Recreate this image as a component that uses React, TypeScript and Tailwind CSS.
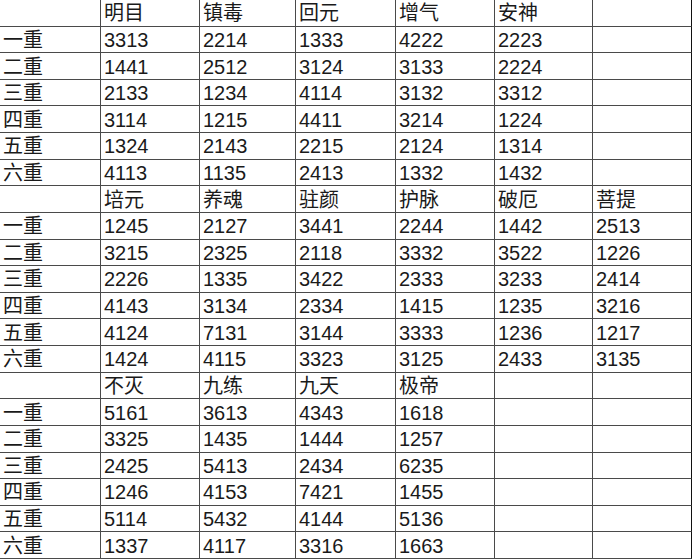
const sections: { head: string[]; rows: string[][] }[] = [
  {
    head: ["明目", "镇毒", "回元", "增气", "安神", ""],
    rows: [
      ["3313", "2214", "1333", "4222", "2223", ""],
      ["1441", "2512", "3124", "3133", "2224", ""],
      ["2133", "1234", "4114", "3132", "3312", ""],
      ["3114", "1215", "4411", "3214", "1224", ""],
      ["1324", "2143", "2215", "2124", "1314", ""],
      ["4113", "1135", "2413", "1332", "1432", ""],
    ],
  },
  {
    head: ["培元", "养魂", "驻颜", "护脉", "破厄", "菩提"],
    rows: [
      ["1245", "2127", "3441", "2244", "1442", "2513"],
      ["3215", "2325", "2118", "3332", "3522", "1226"],
      ["2226", "1335", "3422", "2333", "3233", "2414"],
      ["4143", "3134", "2334", "1415", "1235", "3216"],
      ["4124", "7131", "3144", "3333", "1236", "1217"],
      ["1424", "4115", "3323", "3125", "2433", "3135"],
    ],
  },
  {
    head: ["不灭", "九练", "九天", "极帝", "", ""],
    rows: [
      ["5161", "3613", "4343", "1618", "", ""],
      ["3325", "1435", "1444", "1257", "", ""],
      ["2425", "5413", "2434", "6235", "", ""],
      ["1246", "4153", "7421", "1455", "", ""],
      ["5114", "5432", "4144", "5136", "", ""],
      ["1337", "4117", "3316", "1663", "", ""],
    ],
  },
];

const levels = ["一重", "二重", "三重", "四重", "五重", "六重"];

function Cell({ text, last }: { text: string; last: boolean }) {
  return (
    <div
      className={`flex items-center pl-[3px] pt-[1px] border-b border-[#4a4a4a] leading-none ${
        last ? "border-r border-r-[#111]" : "border-r"
      }`}
    >
      {text}
    </div>
  );
}

export default function App() {
  const lines: string[][] = [];
  sections.forEach((s) => {
    lines.push(["", ...s.head]);
    s.rows.forEach((r, i) => lines.push([levels[i], ...r]));
  });

  return (
    <div
      className="w-[692px] h-[559px] bg-white text-[#1a1a1a] text-[20px] grid grid-cols-[101px_99px_96px_100px_99px_98px_99px] grid-rows-[repeat(21,minmax(0,1fr))]"
      style={{ fontFamily: '"Liberation Sans", "Noto Sans CJK SC", sans-serif' }}
    >
      {lines.map((row, ri) =>
        row.map((t, ci) => <Cell key={`${ri}-${ci}`} text={t} last={ci === 6} />)
      )}
    </div>
  );
}
